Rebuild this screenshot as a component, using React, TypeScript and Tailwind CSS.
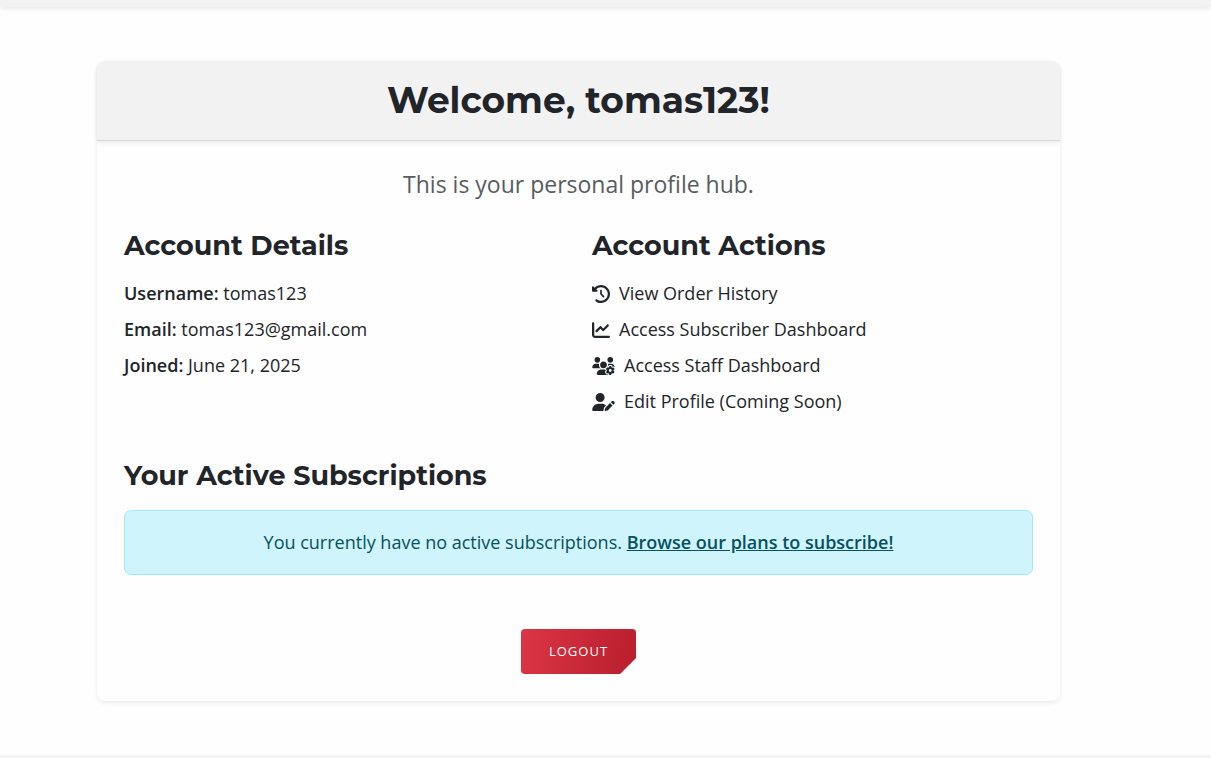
import type { ReactNode } from "react";
import type { IconType } from "react-icons";
import { FaChartLine, FaClockRotateLeft, FaUserPen, FaUsersGear } from "react-icons/fa6";

const details = [
  { label: "Username:", value: "tomas123" },
  { label: "Email:", value: "tomas123@gmail.com" },
  { label: "Joined:", value: "June 21, 2025" },
];

const actions: { label: string; href: string; Icon: IconType; size: string }[] = [
  { label: "View Order History", href: "#orders", Icon: FaClockRotateLeft, size: "w-[18px]" },
  { label: "Access Subscriber Dashboard", href: "#subscriber", Icon: FaChartLine, size: "w-[18px]" },
  { label: "Access Staff Dashboard", href: "#staff", Icon: FaUsersGear, size: "w-[23px]" },
  { label: "Edit Profile (Coming Soon)", href: "#edit", Icon: FaUserPen, size: "w-[23px]" },
];

function SectionTitle({ children }: { children: ReactNode }) {
  return (
    <h2 className="mb-[18px] font-['Montserrat','Inter',sans-serif] text-[27px] leading-[33px] font-bold">
      {children}
    </h2>
  );
}

export default function App() {
  return (
    <div className="bg-[#fefefe] font-['Open_Sans',sans-serif] text-[18px] leading-[27px] font-normal text-[#212529]">
      <header className="h-[7px] bg-[#f2f2f2] shadow-[0_2px_4px_rgba(0,0,0,0.08)]" />
      <main className="py-[54px] pr-[54px]">
        <section className="mx-auto w-full max-w-[963px] rounded-lg bg-[#fefefe] shadow-[0_2px_4px_rgba(0,0,0,0.08)]">
          <div className="rounded-t-lg border-b border-[#dbdbdb] bg-[#f2f2f2] px-[27px] py-[18px] text-center shadow-[0_2px_4px_rgba(0,0,0,0.08)]">
            <h1 className="font-['Montserrat','Inter',sans-serif] text-[36px] leading-[43px] font-bold">
              Welcome, tomas123!
            </h1>
          </div>
          <div className="p-[27px]">
            <p className="mb-[28px] text-center text-[23px] leading-[33px] text-[#595c5f]">
              This is your personal profile hub.
            </p>
            <div className="grid grid-cols-1 gap-[27px] md:grid-cols-2">
              <div>
                <SectionTitle>Account Details</SectionTitle>
                <ul className="flex flex-col gap-[9px]">
                  {details.map((d) => (
                    <li key={d.label}>
                      <strong className="font-semibold">{d.label}</strong> {d.value}
                    </li>
                  ))}
                </ul>
              </div>
              <div>
                <SectionTitle>Account Actions</SectionTitle>
                <ul className="flex flex-col gap-[9px]">
                  {actions.map(({ label, href, Icon, size }) => (
                    <li key={label} className="flex">
                      <a href={href} className="flex items-center gap-[9px]">
                        <Icon className={`h-[18px] ${size}`} aria-hidden="true" />
                        {label}
                      </a>
                    </li>
                  ))}
                </ul>
              </div>
            </div>
            <div className="mt-[44px]">
              <SectionTitle>Your Active Subscriptions</SectionTitle>
              <div className="rounded-[7px] border border-[#9eeaf9] bg-[#cff4fc] p-[18px] text-center text-[#055160]">
                You currently have no active subscriptions.{" "}
                <a href="#plans" className="font-semibold text-[#055160] underline">
                  Browse our plans to subscribe!
                </a>
              </div>
            </div>
            <div className="mt-[54px] text-center">
              <button
                type="button"
                className="mx-auto block h-[45px] rounded-[4px] bg-linear-[100deg] from-[#dc3545] to-[#b81e2c] px-7 text-[13px] tracking-[1px] text-white uppercase [clip-path:polygon(0_0,100%_0,100%_calc(100%-16px),calc(100%-16px)_100%,0_100%)]"
              >
                Logout
              </button>
            </div>
          </div>
        </section>
      </main>
      <footer className="h-[3px] bg-[#f2f2f2]" />
    </div>
  );
}
